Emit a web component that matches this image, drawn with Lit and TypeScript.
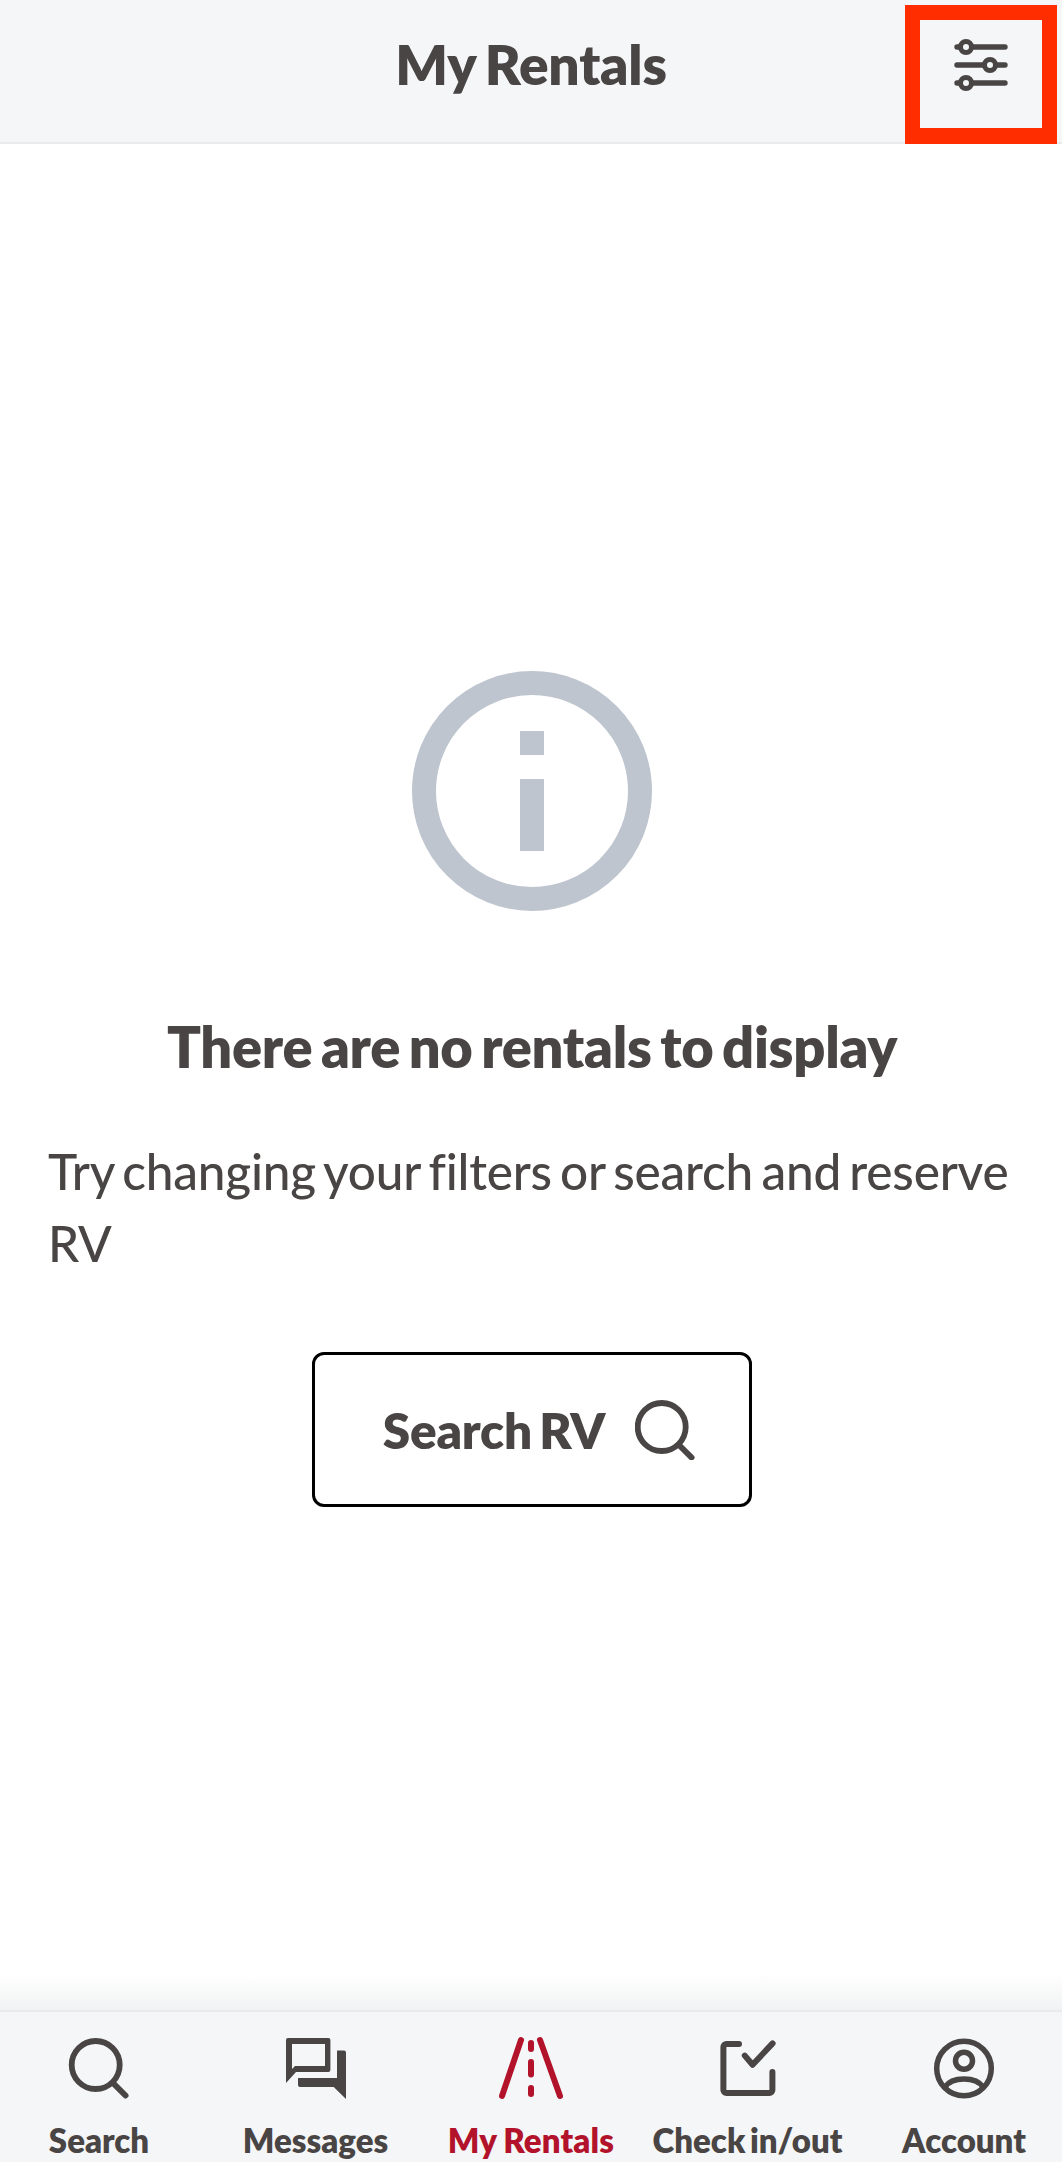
import { LitElement, html, css, svg } from "lit";
import { customElement } from "lit/decorators.js";

const searchIcon = svg`<circle cx="26.7" cy="27" r="24" fill="none" stroke="currentColor" stroke-width="5.8"/><path d="M45 46 L56.5 57.5" fill="none" stroke="currentColor" stroke-width="6" stroke-linecap="round"/>`;

@customElement("app-root")
export class AppRoot extends LitElement {
  static styles = css`
    :host {
      display: flex;
      flex-direction: column;
      min-height: 100vh;
      position: relative;
      background: #fff;
      color: #4a4545;
      font-family: Lato, "Liberation Sans", sans-serif;
    }
    .header {
      box-sizing: border-box;
      height: 144px;
      padding-bottom: 14px;
      border-bottom: 2px solid #e8eaec;
      background: #f4f6f8;
      display: grid;
      place-items: center;
      position: relative;
    }
    .header h1 {
      margin: 0;
      font-size: 55px;
      font-weight: 800;
      word-spacing: -3px;
      letter-spacing: -0.2px;
    }
    .filter {
      position: absolute;
      left: 905px;
      top: 5px;
      width: 122px;
      height: 108px;
      border-style: solid;
      border-color: #ff2d00;
      border-width: 15px 15px 16px;
      display: grid;
      place-items: center;
    }
    .filter svg { width: 60px; height: 60px; display: block; transform: translateY(-9px); }
    .main {
      flex: 1;
      display: flex;
      flex-direction: column;
      align-items: center;
      padding: 527px 46px 0 48px;
    }
    .info { width: 240px; height: 240px; display: block; }
    h2 {
      margin: 101px 0 0;
      font-size: 56px;
      line-height: 70px;
      font-weight: 800;
      word-spacing: -4px;
      letter-spacing: -0.3px;
      text-align: center;
      white-space: nowrap;
    }
    p {
      margin: 53px 0 0;
      align-self: stretch;
      font-size: 49.5px;
      line-height: 72px;
      font-weight: 500;
      word-spacing: -4px;
      letter-spacing: -0.2px;
    }
    .btn {
      margin-top: 73px;
      width: 440px;
      height: 155px;
      box-sizing: border-box;
      border: 3px solid #000;
      border-radius: 12px;
      padding-left: 14px;
      display: flex;
      align-items: center;
      justify-content: center;
      gap: 30px;
      font-size: 49.5px;
      font-weight: 800;
      word-spacing: -4px;
      letter-spacing: -0.2px;
    }
    .btn svg { width: 60px; height: 60px; display: block; }
    .fade {
      height: 36px;
      background: linear-gradient(#fff, #f1f2f3);
    }
    .nav {
      height: 152px;
      border-top: 2px solid #e8eaec;
      background: #f4f6f8;
      display: grid;
      grid-template-columns: 216px 217px 214px 219px 214px;
      margin-left: -9px;
      box-sizing: border-box;
      padding-top: 26px;
      overflow: hidden;
    }
    .item {
      display: flex;
      flex-direction: column;
      align-items: center;
      font-size: 33px;
      font-weight: 800;
      line-height: 42px;
      word-spacing: -3px;
      white-space: nowrap;
    }
    .item svg { width: 60px; height: 60px; display: block; margin-bottom: 21px; overflow: visible; }
    .item.active { color: #b2132b; word-spacing: -1px; letter-spacing: 0.15px; }
  `;

  render() {
    const items = [
      ["Search", searchIcon],
      ["Messages", svg`<path fill-rule="evenodd" d="M0 2a2 2 0 0 1 2-2h40.4a2 2 0 0 1 2 2v30a2 2 0 0 1-2 2H10L0 45ZM6 6v25l3-3h30V6Z" fill="currentColor"/><path d="M51 12.5h7a2 2 0 0 1 2 2V61L47.7 49H14a2 2 0 0 1-2-2v-7h39Z" fill="currentColor"/>`],
      ["My Rentals", svg`<g fill="none" stroke="currentColor" stroke-width="6" stroke-linecap="round"><path d="M20 2 L1 58"/><path d="M39 2 L59 58"/></g><g fill="currentColor"><rect x="27" y="2" width="6" height="12" rx="3"/><rect x="27" y="21" width="6" height="18.5" rx="3"/><rect x="27" y="47" width="6" height="12" rx="3"/></g>`],
      ["Check in/out", svg`<g fill="none" stroke="currentColor" stroke-width="6" stroke-linecap="round" stroke-linejoin="round"><path d="M21 6H8.4a3 3 0 0 0-3 3v43a3 3 0 0 0 3 3h43a3 3 0 0 0 3-3V34"/><path d="M26.8 17.6 L34.6 26.7 L54.6 5.4"/></g>`],
      ["Account", svg`<g fill="none" stroke="currentColor" stroke-width="5.5"><circle cx="30" cy="30.5" r="27.3"/><circle cx="30" cy="22.7" r="8.5"/><path d="M11 49 C18 38.3 42 38.3 49 49"/></g>`],
    ] as const;
    return html`
      <div class="header">
        <h1>My Rentals</h1>
        <div class="filter">
          <svg viewBox="0 0 60 60" fill="none" stroke="currentColor" stroke-width="5.4" stroke-linecap="round">
            <path d="M6 12H54M6 30H54M6 48H54"/>
            <g fill="#f4f6f8" stroke-width="5"><circle cx="15" cy="12" r="5.5"/><circle cx="39" cy="30" r="5.5"/><circle cx="15" cy="48" r="5.5"/></g>
          </svg>
        </div>
      </div>
      <div class="main">
        <svg class="info" viewBox="0 0 240 240" fill="#bec5cf">
          <circle cx="120" cy="120" r="108" fill="none" stroke="#bec5cf" stroke-width="24"/>
          <rect x="108" y="60" width="24" height="24"/>
          <rect x="108" y="108" width="24" height="72"/>
        </svg>
        <h2>There are no rentals to display</h2>
        <p>Try changing your filters or search and reserve RV</p>
        <div class="btn">
          <span>Search RV</span>
          <svg viewBox="0 0 60 60">${searchIcon}</svg>
        </div>
      </div>
      <div class="fade"></div>
      <div class="nav">
        ${items.map(([label, icon]) => html`
          <div class="item ${label === "My Rentals" ? "active" : ""}">
            <svg viewBox="0 0 60 60">${icon}</svg>
            <span>${label}</span>
          </div>`)}
      </div>
    `;
  }
}
